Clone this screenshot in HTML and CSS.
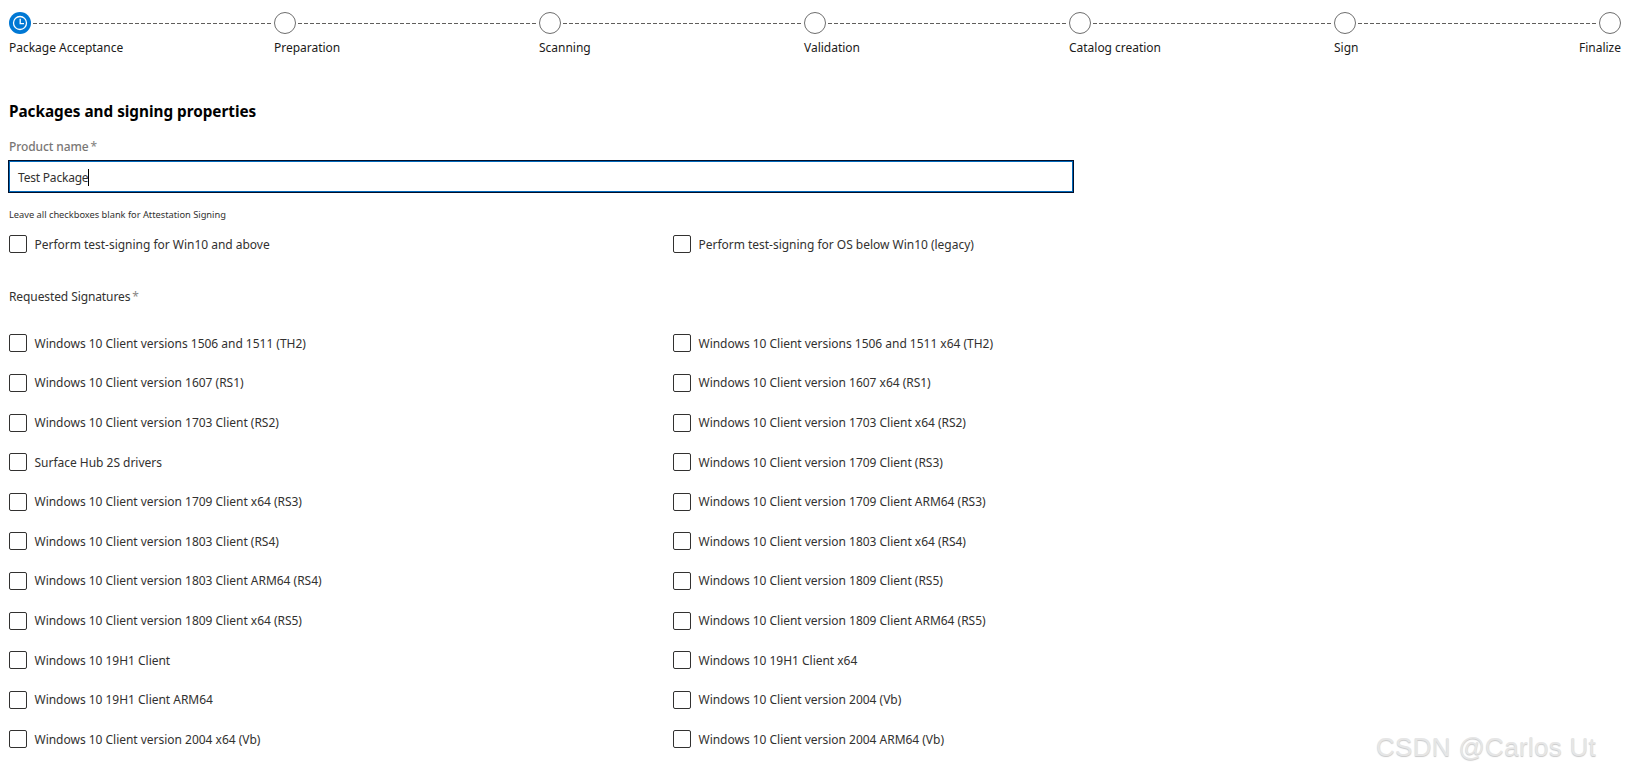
FILE: index.html
```html
<!DOCTYPE html>
<html lang="en">
<head>
<meta charset="utf-8">
<title>Packages and signing properties</title>
<link rel="stylesheet" href="styles.css">
</head>
<body>
<ol class="stepper">
  <li class="step active"><span class="dot"><svg viewBox="0 0 22 22" width="22" height="22"><circle cx="11" cy="11" r="6.5" fill="none" stroke="#fff" stroke-width="1.3"/><path d="M11.2 6.8V11.6H15" fill="none" stroke="#fff" stroke-width="1.3"/></svg></span><span class="step-label">Package Acceptance</span></li>
  <li class="step"><span class="dot"></span><span class="step-label">Preparation</span></li>
  <li class="step"><span class="dot"></span><span class="step-label">Scanning</span></li>
  <li class="step"><span class="dot"></span><span class="step-label">Validation</span></li>
  <li class="step"><span class="dot"></span><span class="step-label">Catalog creation</span></li>
  <li class="step"><span class="dot"></span><span class="step-label">Sign</span></li>
  <li class="step last"><span class="dot"></span><span class="step-label">Finalize</span></li>
</ol>
<main class="form">
  <h2 class="title">Packages and signing properties</h2>
  <div class="field-label">Product name<span class="req">*</span></div>
  <div class="input"><span>Test Package</span><i class="caret"></i></div>
  <p class="hint">Leave all checkboxes blank for Attestation Signing</p>
  <div class="grid test-grid">
    <label class="check"><span class="box"></span>Perform test-signing for Win10 and above</label>
    <label class="check"><span class="box"></span>Perform test-signing for OS below Win10 (legacy)</label>
  </div>
  <div class="sig-label">Requested Signatures<span class="req">*</span></div>
  <div class="grid sigs">
    <label class="check"><span class="box"></span>Windows 10 Client versions 1506 and 1511 (TH2)</label>
    <label class="check"><span class="box"></span>Windows 10 Client versions 1506 and 1511 x64 (TH2)</label>
    <label class="check"><span class="box"></span>Windows 10 Client version 1607 (RS1)</label>
    <label class="check"><span class="box"></span>Windows 10 Client version 1607 x64 (RS1)</label>
    <label class="check"><span class="box"></span>Windows 10 Client version 1703 Client (RS2)</label>
    <label class="check"><span class="box"></span>Windows 10 Client version 1703 Client x64 (RS2)</label>
    <label class="check"><span class="box"></span>Surface Hub 2S drivers</label>
    <label class="check"><span class="box"></span>Windows 10 Client version 1709 Client (RS3)</label>
    <label class="check"><span class="box"></span>Windows 10 Client version 1709 Client x64 (RS3)</label>
    <label class="check"><span class="box"></span>Windows 10 Client version 1709 Client ARM64 (RS3)</label>
    <label class="check"><span class="box"></span>Windows 10 Client version 1803 Client (RS4)</label>
    <label class="check"><span class="box"></span>Windows 10 Client version 1803 Client x64 (RS4)</label>
    <label class="check"><span class="box"></span>Windows 10 Client version 1803 Client ARM64 (RS4)</label>
    <label class="check"><span class="box"></span>Windows 10 Client version 1809 Client (RS5)</label>
    <label class="check"><span class="box"></span>Windows 10 Client version 1809 Client x64 (RS5)</label>
    <label class="check"><span class="box"></span>Windows 10 Client version 1809 Client ARM64 (RS5)</label>
    <label class="check"><span class="box"></span>Windows 10 19H1 Client</label>
    <label class="check"><span class="box"></span>Windows 10 19H1 Client x64</label>
    <label class="check"><span class="box"></span>Windows 10 19H1 Client ARM64</label>
    <label class="check"><span class="box"></span>Windows 10 Client version 2004 (Vb)</label>
    <label class="check"><span class="box"></span>Windows 10 Client version 2004 x64 (Vb)</label>
    <label class="check"><span class="box"></span>Windows 10 Client version 2004 ARM64 (Vb)</label>
  </div>
</main>
<div class="watermark">CSDN @Carlos Ut</div>
</body>
</html>
```
FILE: styles.css
```css
* { box-sizing: border-box; }
html, body { height: 100%; }
body {
  margin: 0;
  height: 776px;
  overflow: hidden;
  background: #fff;
  color: #1b1a19;
  font-family: "Noto Sans", "Open Sans", sans-serif;
  font-size: 12px;
  letter-spacing: -0.02px;
  position: relative;
}
.stepper {
  list-style: none;
  margin: 0;
  padding: 12px 4px 0 9px;
  display: flex;
}
.step {
  flex: 0 0 265px;
  min-width: 0;
  display: flex;
  flex-direction: column;
  align-items: flex-start;
  position: relative;
}
.step.last { flex: 0 0 22px; align-items: flex-end; }
.step::after {
  content: "";
  position: absolute;
  left: 24px;
  width: 240px;
  top: 11px;
  height: 1px;
  background: repeating-linear-gradient(90deg, #605e5c 0 4px, transparent 4px 6px);
}
.step.last::after { display: none; }
.dot {
  width: 22px;
  height: 22px;
  border-radius: 50%;
  border: 1px solid #6e6e6e;
  background: #fff;
  display: block;
  flex: none;
}
.active .dot { background: #0078d4; border: 0; }
.dot svg { display: block; }
.step-label { margin-top: 5px; line-height: 18px; white-space: nowrap; }
.form { padding: 0 0 0 9px; }
.title { margin: 43px 0 0; font-size: 15.3px; line-height: 22px; font-weight: 700; color: #000; }
.field-label { margin-top: 16px; line-height: 18px; font-weight: 500; letter-spacing: -0.1px; color: #797775; }
.req { margin-left: 2px; color: #8a8886; }
.input {
  margin: 4px 0 0 -1px;
  width: 1066px;
  height: 33px;
  border: 1px solid #000f2b;
  box-shadow: inset 0 0 0 1px #0067b8;
  padding: 2px 8px 0 9px;
  display: flex;
  align-items: center;
  letter-spacing: -0.2px;
  color: #323130;
}
.caret { display: block; width: 1px; height: 17px; background: #000; }
.hint { margin: 15px 0 0; font-size: 9.3px; line-height: 14px; color: #323130; }
.grid { display: grid; grid-template-columns: 664px 1fr; width: 1100px; }
.test-grid { margin-top: 13px; }
.check { display: flex; align-items: center; height: 18px; white-space: nowrap; color: #323130; }
.box { flex: none; width: 18px; height: 18px; border: 1px solid #323130; border-radius: 2px; margin-right: 7.5px; }
.sig-label { margin-top: 35px; line-height: 18px; letter-spacing: -0.1px; color: #323130; }
.sigs { margin-top: 28.4px; row-gap: 21.6px; }
.watermark {
  position: absolute;
  left: 1376px;
  top: 731px;
  font-family: "Liberation Sans", sans-serif;
  font-size: 26px;
  line-height: 32px;
  letter-spacing: 0.3px;
  color: #e6e6e6;
  text-shadow: 0 1px 1px #c9c9c9;
  white-space: nowrap;
}
```
